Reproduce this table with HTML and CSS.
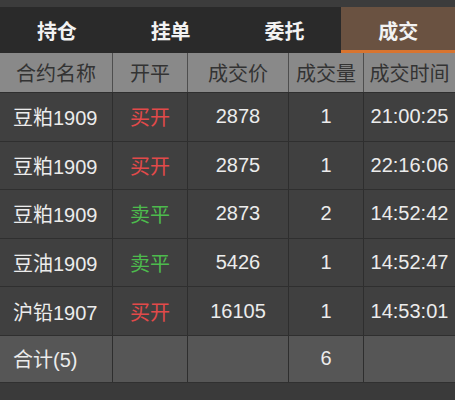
FILE: index.html
```html
<!DOCTYPE html>
<html lang="zh">
<head>
<meta charset="utf-8">
<link rel="stylesheet" href="styles.css">
</head>
<body>
<div class="topstrip"></div>
<div class="tabs">
  <div class="tab">持仓</div>
  <div class="tab">挂单</div>
  <div class="tab">委托</div>
  <div class="tab active">成交</div>
</div>
<div class="table">
  <div class="row head">
    <div class="cell">合约名称</div>
    <div class="cell">开平</div>
    <div class="cell">成交价</div>
    <div class="cell">成交量</div>
    <div class="cell">成交时间</div>
  </div>
  <div class="row">
    <div class="cell name">豆粕1909</div>
    <div class="cell buy">买开</div>
    <div class="cell">2878</div>
    <div class="cell">1</div>
    <div class="cell">21:00:25</div>
  </div>
  <div class="row">
    <div class="cell name">豆粕1909</div>
    <div class="cell buy">买开</div>
    <div class="cell">2875</div>
    <div class="cell">1</div>
    <div class="cell">22:16:06</div>
  </div>
  <div class="row">
    <div class="cell name">豆粕1909</div>
    <div class="cell sell">卖平</div>
    <div class="cell">2873</div>
    <div class="cell">2</div>
    <div class="cell">14:52:42</div>
  </div>
  <div class="row">
    <div class="cell name">豆油1909</div>
    <div class="cell sell">卖平</div>
    <div class="cell">5426</div>
    <div class="cell">1</div>
    <div class="cell">14:52:47</div>
  </div>
  <div class="row">
    <div class="cell name">沪铅1907</div>
    <div class="cell buy">买开</div>
    <div class="cell">16105</div>
    <div class="cell">1</div>
    <div class="cell">14:53:01</div>
  </div>
  <div class="row total">
    <div class="cell name">合计(5)</div>
    <div class="cell"></div>
    <div class="cell"></div>
    <div class="cell">6</div>
    <div class="cell"></div>
  </div>
</div>
</body>
</html>
```
FILE: styles.css
```css
html, body {
  margin: 0;
  padding: 0;
  background: #3a3a3a;
  font-family: "Liberation Sans", "Noto Sans CJK SC", sans-serif;
  width: 455px;
  height: 400px;
  overflow: hidden;
}
.topstrip {
  height: 7px;
  background: #3c3c3c;
}
.tabs {
  display: grid;
  grid-template-columns: repeat(4, 1fr);
  height: 46px;
  background: #2a2a2a;
}
.tab {
  display: flex;
  align-items: center;
  justify-content: center;
  color: #f2f2f2;
  font-size: 20px;
  font-weight: bold;
  box-sizing: border-box;
  padding-top: 1px;
}
.tab.active {
  background: #6a5241;
  border-bottom: 3px solid #d8742f;
  padding-top: 4px;
}
.table {
  display: flex;
  flex-direction: column;
}
.row {
  display: grid;
  grid-template-columns: 113px 75px 101px 75px 91px;
  height: 48.6px;
  background: #404040;
  border-bottom: 1px solid #2f2f2f;
  box-sizing: border-box;
  color: #ececec;
  font-size: 20px;
}
.row.head {
  height: 40px;
  background: #898989;
  color: #333333;
  border-bottom: 1px solid #2f2f2f;
}
.row.total {
  height: 47px;
  background: #565656;
  border-bottom: 1px solid #303030;
}
.cell {
  display: flex;
  align-items: center;
  justify-content: center;
  border-right: 1px solid #2e2e2e;
  white-space: nowrap;
}
.head .cell {
  border-right-color: #4e4e4e;
}
.cell:last-child {
  border-right: none;
}
.cell.name {
  justify-content: flex-start;
  padding-left: 13px;
}
.head .cell:first-child {
  justify-content: center;
}
.buy {
  color: #e24a4a;
}
.sell {
  color: #4dbb4d;
}
```
